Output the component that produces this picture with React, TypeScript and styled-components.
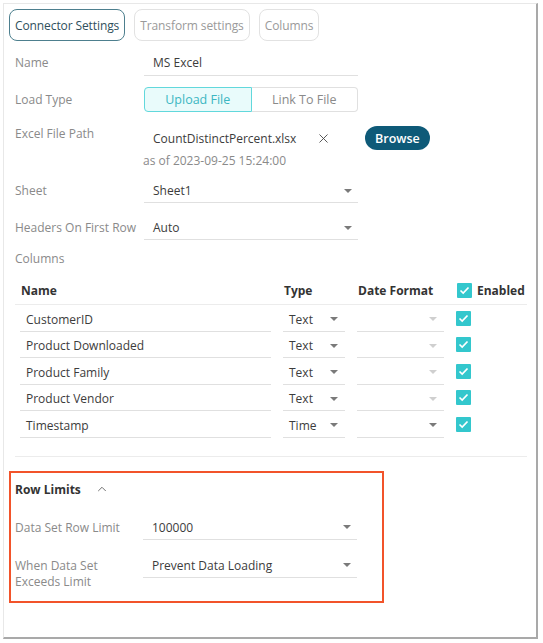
import React from "react";
import styled, { createGlobalStyle } from "styled-components";
import { X, ChevronUp } from "lucide-react";

const GlobalStyle = createGlobalStyle`
  body {
    margin: 0;
    background: #ffffff;
    font-family: "Open Sans", "Liberation Sans", sans-serif;
    font-size: 12px;
    color: #3c3c3c;
  }
`;

const Page = styled.div`
  padding: 3px 3px 0 3px;
`;

const Panel = styled.div`
  width: 535px;
  height: 636px;
  box-sizing: border-box;
  border: 1px solid #e8e8e8;
  border-right: 2px solid #a9a9a9;
  border-bottom: 2px solid #a9a9a9;
  background: #fff;
  overflow: hidden;
`;

const Tabs = styled.div`
  display: flex;
  gap: 9px;
  margin: 5px 0 0 5px;
`;

const Tab = styled.div<{ $active?: boolean }>`
  height: 32px;
  box-sizing: border-box;
  padding: 0 5px;
  display: flex;
  align-items: center;
  border-radius: 8px;
  border: ${(p) => (p.$active ? "1.5px solid #4d7f8e" : "1px solid #e2e2e2")};
  color: ${(p) => (p.$active ? "#2f4f5c" : "#9a9a9a")};
  font-size: 12px;
  letter-spacing: -0.1px;
`;

const Form = styled.div`
  padding-left: 11px;
  display: flex;
  flex-direction: column;
`;

const Row = styled.div<{ $mt: number; $top?: boolean }>`
  display: flex;
  align-items: ${(p) => (p.$top ? "flex-start" : "center")};
  margin-top: ${(p) => p.$mt}px;
`;

const Label = styled.div<{ $w?: number }>`
  width: ${(p) => p.$w ?? 129}px;
  flex-shrink: 0;
  color: #8a8a8a;
  line-height: 16px;
`;

const Field = styled.div<{ $h?: number; $w?: number }>`
  width: ${(p) => p.$w ?? 214}px;
  height: ${(p) => p.$h ?? 24}px;
  box-sizing: border-box;
  border-bottom: 1px solid #e0e0e0;
  padding: 0 6px 0 9px;
  display: flex;
  align-items: center;
  justify-content: space-between;
  color: #3c3c3c;
`;

const Caret = styled.span<{ $light?: boolean }>`
  width: 0;
  height: 0;
  border-left: 4.5px solid transparent;
  border-right: 4.5px solid transparent;
  border-top: 4.5px solid ${(p) => (p.$light ? "#cfcfcf" : "#7a7a7a")};
`;

const Toggle = styled.div`
  display: flex;
  width: 214px;
  height: 25px;
`;

const ToggleOption = styled.div<{ $active?: boolean }>`
  flex: 1;
  display: flex;
  align-items: center;
  justify-content: center;
  box-sizing: border-box;
  font-size: 12.5px;
  border: 1px solid ${(p) => (p.$active ? "#62d8dc" : "#e0e0e0")};
  background: ${(p) => (p.$active ? "#e9fbfb" : "#fff")};
  color: ${(p) => (p.$active ? "#3bb7c2" : "#8a8a8a")};
  border-radius: ${(p) => (p.$active ? "4px 0 0 4px" : "0 4px 4px 0")};
  ${(p) => (p.$active ? "" : "border-left: none;")}
`;

const FileBox = styled.div`
  display: flex;
  flex-direction: column;
`;

const FileLine = styled.div`
  display: flex;
  align-items: center;
  height: 24px;
`;

const FileName = styled.span`
  margin-left: 9px;
  width: 163px;
  color: #3c3c3c;
`;

const ClearIcon = styled(X)`
  color: #444;
  margin-right: 34px;
`;

const BrowseButton = styled.button`
  height: 24px;
  padding: 0 10px;
  border: none;
  border-radius: 12px;
  background: #0e5a78;
  color: #fff;
  font-family: "Open Sans", "Liberation Sans", sans-serif;
  font-size: 12.5px;
  font-weight: 600;
`;

const Stamp = styled.div`
  color: #8a8a8a;
  line-height: 17px;
  margin-top: 2px;
  margin-left: -1px;
`;

const SectionLabel = styled.div`
  margin-top: 10px;
  line-height: 18px;
  color: #8a8a8a;
`;

const Table = styled.div`
  margin-left: -0.5px;
  width: 512.5px;
  display: flex;
  flex-direction: column;
`;

const TableHead = styled.div`
  display: grid;
  grid-template-columns: 251px 62px 87px auto;
  column-gap: 12px;
  padding-left: 5.5px;
  height: 28px;
  margin-top: 8px;
  align-items: center;
  border-bottom: 1px solid #ececec;
  font-weight: 700;
  color: #333;
  font-size: 12px;
`;

const HeadCell = styled.div`
  padding-left: 1px;
  display: flex;
  align-items: center;
  gap: 5px;
`;

const TableRow = styled.div`
  display: grid;
  grid-template-columns: 251px 62px 87px auto;
  column-gap: 12px;
  padding-left: 5.5px;
  height: 26.5px;
  align-items: end;
`;

const Cell = styled.div`
  height: 24px;
  box-sizing: border-box;
  border-bottom: 1px solid #e0e0e0;
  padding: 0 7px 0 6px;
  display: flex;
  align-items: center;
  justify-content: space-between;
  color: #3c3c3c;
  font-size: 12px;
`;

const CheckCell = styled.div`
  height: 26.5px;
  display: flex;
  align-items: center;
`;

const Check = styled.span`
  width: 15px;
  height: 15px;
  background: #33c7cd;
  border-radius: 1px;
  display: inline-flex;
  align-items: center;
  justify-content: center;
`;

const Divider = styled.div`
  margin-top: 18px;
  margin-left: -0.5px;
  width: 512.5px;
  border-top: 1px solid #ececec;
`;

const LimitsBox = styled.div`
  margin: 14px 0 0 5px;
  width: 375px;
  box-sizing: border-box;
  border: 2px solid #f2532a;
  padding: 8px 0 11px 4px;
  display: flex;
  flex-direction: column;
`;

const LimitsTitle = styled.div`
  display: flex;
  align-items: center;
  line-height: 18px;
  font-weight: 700;
  color: #333;
  gap: 14px;
`;

const Chevron = styled(ChevronUp)`
  color: #666;
  margin-top: -2px;
`;

const CheckMark = () => (
  <svg width="11" height="9" viewBox="0 0 11 9">
    <path d="M1.5 4.5 L4.2 7 L9.5 1.5" fill="none" stroke="#fff" strokeWidth="1.7" />
  </svg>
);

const columns = [
  { name: "CustomerID", type: "Text", light: true },
  { name: "Product Downloaded", type: "Text", light: true },
  { name: "Product Family", type: "Text", light: true },
  { name: "Product Vendor", type: "Text", light: true },
  { name: "Timestamp", type: "Time", light: false },
];

export default function App() {
  return (
    <Page>
      <GlobalStyle />
      <Panel>
        <Tabs>
          <Tab $active>Connector Settings</Tab>
          <Tab>Transform settings</Tab>
          <Tab>Columns</Tab>
        </Tabs>
        <Form>
          <Row $mt={9}>
            <Label>Name</Label>
            <Field $h={26}>MS Excel</Field>
          </Row>
          <Row $mt={11}>
            <Label>Load Type</Label>
            <Toggle>
              <ToggleOption $active>Upload File</ToggleOption>
              <ToggleOption>Link To File</ToggleOption>
            </Toggle>
          </Row>
          <Row $mt={14} $top>
            <Label>Excel File Path</Label>
            <FileBox>
              <FileLine>
                <FileName>CountDistinctPercent.xlsx</FileName>
                <ClearIcon size={15} strokeWidth={1.4} />
                <BrowseButton>Browse</BrowseButton>
              </FileLine>
              <Stamp>as of 2023-09-25 15:24:00</Stamp>
            </FileBox>
          </Row>
          <Row $mt={10}>
            <Label>Sheet</Label>
            <Field>
              Sheet1
              <Caret />
            </Field>
          </Row>
          <Row $mt={13}>
            <Label>Headers On First Row</Label>
            <Field>
              Auto
              <Caret />
            </Field>
          </Row>
          <SectionLabel>Columns</SectionLabel>
          <Table>
            <TableHead>
              <HeadCell>Name</HeadCell>
              <HeadCell>Type</HeadCell>
              <HeadCell>Date Format</HeadCell>
              <HeadCell>
                <Check>
                  <CheckMark />
                </Check>
                Enabled
              </HeadCell>
            </TableHead>
            {columns.map((c) => (
              <TableRow key={c.name}>
                <Cell>{c.name}</Cell>
                <Cell>
                  {c.type}
                  <Caret />
                </Cell>
                <Cell>
                  <span />
                  <Caret $light={c.light} />
                </Cell>
                <CheckCell>
                  <Check>
                    <CheckMark />
                  </Check>
                </CheckCell>
              </TableRow>
            ))}
          </Table>
          <Divider />
        </Form>
        <LimitsBox>
          <LimitsTitle>
            Row Limits
            <Chevron size={14} strokeWidth={1.6} />
          </LimitsTitle>
          <Row $mt={17}>
            <Label $w={128}>Data Set Row Limit</Label>
            <Field>
              100000
              <Caret />
            </Field>
          </Row>
          <Row $mt={14} $top>
            <Label $w={128} style={{ marginTop: 4 }}>
              When Data Set
              <br />
              Exceeds Limit
            </Label>
            <Field>
              Prevent Data Loading
              <Caret />
            </Field>
          </Row>
        </LimitsBox>
      </Panel>
    </Page>
  );
}
